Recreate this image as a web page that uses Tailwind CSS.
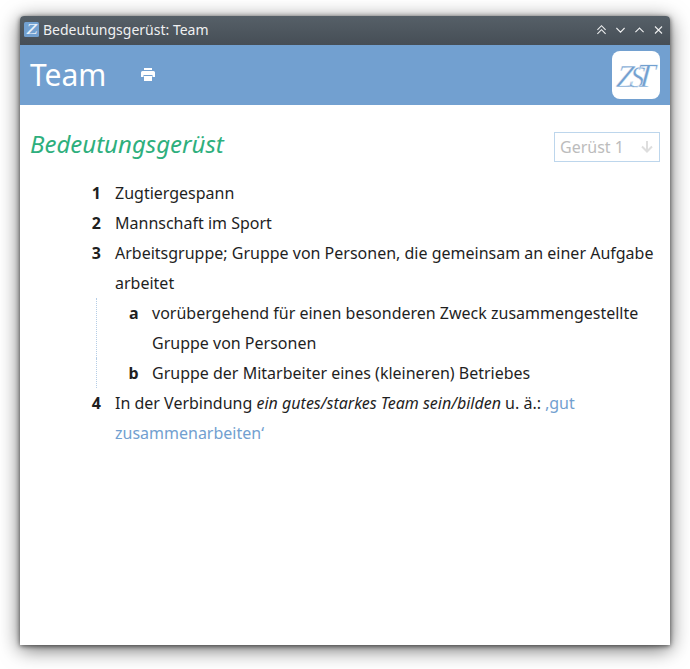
<!DOCTYPE html>
<html lang="de">
<head>
<meta charset="utf-8">
<title>Bedeutungsgerüst: Team</title>
<script src="https://cdn.jsdelivr.net/npm/@tailwindcss/browser@4"></script>
</head>
<body class="bg-white w-[690px] h-[669px] overflow-hidden px-5 pt-4 font-['Noto_Sans',sans-serif] text-[#1f1f1f]">
<div class="w-[650px] h-[629px] bg-white rounded-t-[4px] shadow-[0_4px_20px_rgba(0,0,0,0.6),0_1px_5px_rgba(0,0,0,0.6)]">
  <div class="h-[29px] rounded-t-[4px] bg-linear-to-b from-[#566068] to-[#464e56] flex items-center pl-1 pr-[6px] text-[#eff0f1]">
    <svg class="w-[15px] h-[15px] mr-1 mb-[2px]" viewBox="0 0 15 15"><rect width="15" height="15" rx="1.5" fill="#72a0d0"/><text x="2.2" y="12.3" font-family="Liberation Serif, serif" font-style="italic" font-size="15" textLength="11" lengthAdjust="spacingAndGlyphs" fill="#e8f1fa">Z</text></svg>
    <div class="text-[14px] leading-[27px] pb-[2px] flex-1">Bedeutungsgerüst: Team</div>
    <svg class="w-[68px] h-[12px] mb-[2px]" viewBox="0 0 68 12" fill="none" stroke="#eff0f1" stroke-width="1.1"><path d="M1.4 5.8 5.5 1.7 9.6 5.8M1.4 9.8 5.5 5.7 9.6 9.8M20.4 4 24.5 8.1 28.6 4M39.4 8.1 43.5 4 47.6 8.1M59 2.500l7 7M66 2.500l-7 7"/></svg>
  </div>
  <div class="h-[60px] bg-[#72a0d0] flex items-center px-[10px] text-white">
    <h1 class="text-[30px] leading-[60px]">Team</h1>
    <svg class="ml-[35px] w-[14px] h-[13px] mb-[2px]" viewBox="0 0 14 13" fill="#fff"><path d="M3 0h8v2H3zM1.500 3h11A1.500 1.500 0 0 1 14 4.500V9h-2.500V7h-9v2H0V4.500A1.500 1.500 0 0 1 1.500 3zM3 8h8v5H3z"/></svg>
    <div class="ml-auto w-12 h-12 rounded-lg bg-white">
      <svg class="w-12 h-12" viewBox="0 0 48 48"><text transform="translate(3.500 35.500) skewX(-5)" x="0 13.500 19.500" y="0 0 .8" font-size="32" font-family="Liberation Serif, serif" font-style="italic" fill="#72a0d0" stroke="#fff" stroke-width=".4">Z<tspan font-size="30">S</tspan><tspan font-size="34">T</tspan></text></svg>
    </div>
  </div>
  <div class="px-[10px] pt-[27px]">
    <div class="flex justify-between items-start h-[46px]">
      <h2 class="text-[24px] leading-[24px] italic text-[#2eaf7d]">Bedeutungsgerüst</h2>
      <div class="w-[106px] h-[30px] border border-[#bdd6ec] flex items-center justify-between pl-[5px] pr-[6px] text-[16px] text-[#bcbcbc]">
        <span>Gerüst 1</span>
        <svg class="w-3 h-3" viewBox="0 0 12 12" fill="none" stroke="#dedede" stroke-width="2"><path d="M6 0v10M1 5.500l5 5 5-5"/></svg>
      </div>
    </div>
    <ol class="text-[16px] leading-[30px] -mr-1">
      <li class="flex"><b class="w-[71px] mr-[14px] text-right shrink-0">1</b><span>Zugtiergespann</span></li>
      <li class="flex"><b class="w-[71px] mr-[14px] text-right shrink-0">2</b><span>Mannschaft im Sport</span></li>
      <li class="flex"><b class="w-[71px] mr-[14px] text-right shrink-0">3</b><span>Arbeitsgruppe; Gruppe von Personen, die gemeinsam an einer Aufgabe<br>arbeitet</span></li>
      <li class="ml-[66px]">
        <div class="flex border-l border-dotted border-[#b5cde6]"><b class="w-[41.500px] mr-[13.500px] text-right shrink-0">a</b><span>vorübergehend für einen besonderen Zweck zusammengestellte<br>Gruppe von Personen</span></div>
        <div class="flex border-l border-dotted border-[#b5cde6]"><b class="w-[41.500px] mr-[13.500px] text-right shrink-0">b</b><span>Gruppe der Mitarbeiter eines (kleineren) Betriebes</span></div>
      </li>
      <li class="flex"><b class="w-[71px] mr-[14px] text-right shrink-0">4</b><span>In der Verbindung <i>ein gutes/starkes Team sein/bilden</i> u. ä.: <span class="text-[#72a0d0]">‚gut<br>zusammenarbeiten‘</span></span></li>
    </ol>
  </div>
</div>
</body>
</html>
